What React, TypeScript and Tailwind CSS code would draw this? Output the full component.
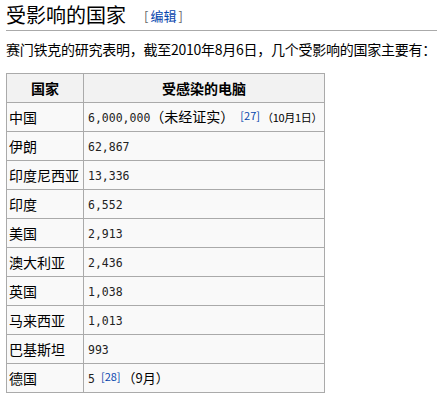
const rows: { name: string; count: string; ref?: string; note?: string; extra?: string; small?: boolean }[] = [
  { name: "中国", count: "6,000,000", extra: "（未经证实）", ref: "[27]", note: "（10月1日）", small: true },
  { name: "伊朗", count: "62,867" },
  { name: "印度尼西亚", count: "13,336" },
  { name: "印度", count: "6,552" },
  { name: "美国", count: "2,913" },
  { name: "澳大利亚", count: "2,436" },
  { name: "英国", count: "1,038" },
  { name: "马来西亚", count: "1,013" },
  { name: "巴基斯坦", count: "993" },
  { name: "德国", count: "5", ref: "[28]", note: "（9月）" },
];

export default function App() {
  return (
    <div className="w-[439px] h-[394px] bg-white pl-[6px] pr-[2px] text-black font-['Noto_Sans_CJK_SC',sans-serif] overflow-hidden">
      <h2 className="h-[31px] border-b border-[#aaa] flex items-end pb-[1px]">
        <span className="text-[20px] leading-[28px] font-normal">受影响的国家</span>
        <span className="ml-[18px] mb-[3px] text-[13px] leading-[20px] text-[#666]">
          [<a className="text-[#0645ad] px-[2px]">编辑</a>]
        </span>
      </h2>
      <p className="mt-[8px] text-[14px] leading-[20px] whitespace-nowrap tracking-[-0.25px]">
        赛门铁克的研究表明，截至2010年8月6日，几个受影响的国家主要有：
      </p>
      <table className="mt-[14px] w-[318px] table-fixed border-collapse border border-[#aaa] text-[14px]">
        <thead>
          <tr className="h-[29px]">
            <th className="w-[77px] border border-[#aaa] bg-[#f2f2f2] font-bold text-center">国家</th>
            <th className="w-[241px] border border-[#aaa] bg-[#f2f2f2] font-bold text-center">受感染的电脑</th>
          </tr>
        </thead>
        <tbody>
          {rows.map((r) => (
            <tr key={r.name} className="h-[29px]">
              <td className="border border-[#aaa] bg-[#f9f9f9] px-[2px] whitespace-nowrap leading-[20px]">{r.name}</td>
              <td className="border border-[#aaa] bg-[#f9f9f9] px-[4px] whitespace-nowrap leading-[20px]">
                <span className="text-[11.5px] text-[#222] font-['DejaVu_Sans_Mono',monospace]">{r.count}</span>
                {r.extra && <span>{r.extra}</span>}
                {r.ref && (
                  <sup className="text-[11px] text-[#0645ad] ml-[6px] mr-[2px] relative top-[-2px]">{r.ref}</sup>
                )}
                {r.note && (
                  <span className={r.small ? "text-[11px] tracking-[-0.3px]" : "text-[13px]"}>{r.note}</span>
                )}
              </td>
            </tr>
          ))}
        </tbody>
      </table>
    </div>
  );
}
